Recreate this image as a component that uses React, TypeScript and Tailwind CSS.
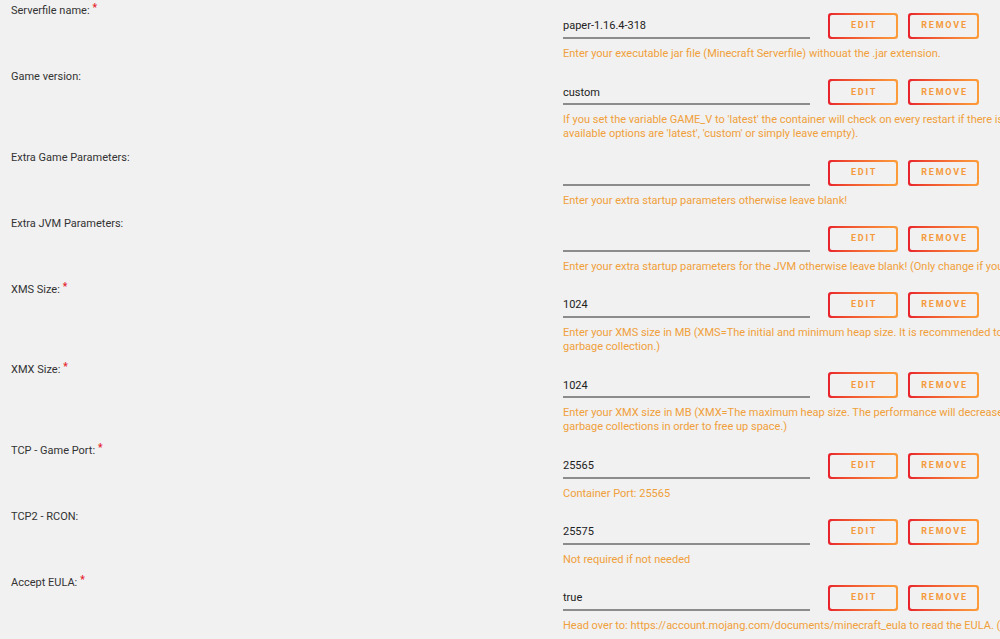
const rows = [
  {
    label: "Serverfile name:",
    required: true,
    value: "paper-1.16.4-318",
    help: ["Enter your executable jar file (Minecraft Serverfile) withouat the .jar extension."],
  },
  {
    label: "Game version:",
    required: false,
    value: "custom",
    help: [
      "If you set the variable GAME_V to 'latest' the container will check on every restart if there is a newer version available (the",
      "available options are 'latest', 'custom' or simply leave empty).",
    ],
  },
  {
    label: "Extra Game Parameters:",
    required: false,
    value: "",
    help: ["Enter your extra startup parameters otherwise leave blank!"],
  },
  {
    label: "Extra JVM Parameters:",
    required: false,
    value: "",
    help: ["Enter your extra startup parameters for the JVM otherwise leave blank! (Only change if you know what you are doing)"],
  },
  {
    label: "XMS Size:",
    required: true,
    value: "1024",
    help: [
      "Enter your XMS size in MB (XMS=The initial and minimum heap size. It is recommended to set the minimum heap size",
      "garbage collection.)",
    ],
  },
  {
    label: "XMX Size:",
    required: true,
    value: "1024",
    help: [
      "Enter your XMX size in MB (XMX=The maximum heap size. The performance will decrease if the max heap value is set lower",
      "garbage collections in order to free up space.)",
    ],
  },
  {
    label: "TCP - Game Port:",
    required: true,
    value: "25565",
    help: ["Container Port: 25565"],
  },
  {
    label: "TCP2 - RCON:",
    required: false,
    value: "25575",
    help: ["Not required if not needed"],
  },
  {
    label: "Accept EULA:",
    required: true,
    value: "true",
    help: ["Head over to: https://account.mojang.com/documents/minecraft_eula to read the EULA. (true or false)"],
  },
];

function OutlineButton({ text, width }: { text: string; width: string }) {
  return (
    <div className={`${width} h-[26px] rounded-[3px] bg-gradient-to-r from-[#e8202c] to-[#fd9d3a] p-[2px]`}>
      <div className="flex h-full w-full items-center justify-center rounded-[2px] bg-[#f1f1f1] pl-[2px] text-[9px] font-bold tracking-[1.8px] text-[#f59a3c]">
        {text}
      </div>
    </div>
  );
}

export default function App() {
  return (
    <div
      className="h-[639px] w-full overflow-hidden bg-[#f1f1f1] text-[#333]"
      style={{ fontFamily: 'Roboto, "Noto Sans", sans-serif' }}
    >
      {rows.map((row) => (
        <div key={row.label} className="flex items-start">
          <div className="w-[563px] shrink-0 pl-[11px] pt-[4px] text-[11px] leading-[14px]">
            {row.label}
            {row.required && <span className="relative -top-[3px] ml-[3px] text-[10px] font-bold text-[#e5242c]">*</span>}
          </div>
          <div className="flex flex-col pt-[13px] pb-[5.25px]">
            <div className="flex items-start">
              <div className="flex h-[26px] w-[247px] items-center border-b-2 border-[#8c8c8c] pt-[3px] text-[11px] text-[#222]">
                {row.value}
              </div>
              <div className="ml-[18px]">
                <OutlineButton text="EDIT" width="w-[70px]" />
              </div>
              <div className="ml-[10px]">
                <OutlineButton text="REMOVE" width="w-[71px]" />
              </div>
            </div>
            <div className="mt-[8px] text-[11px] leading-[14px] text-[#f0a03a]">
              {row.help.map((line) => (
                <div key={line} className="whitespace-nowrap">
                  {line}
                </div>
              ))}
            </div>
          </div>
        </div>
      ))}
    </div>
  );
}
